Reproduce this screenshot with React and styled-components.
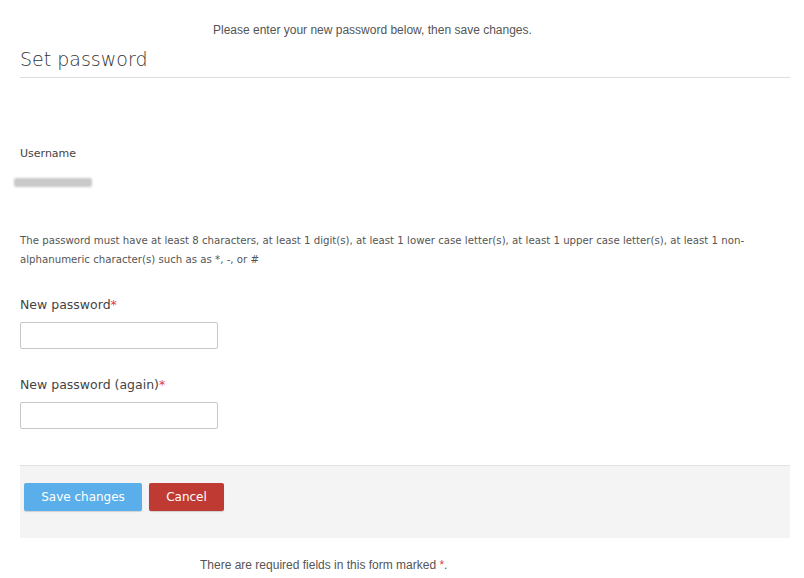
import React from "react";
import styled, { createGlobalStyle } from "styled-components";

const GlobalStyle = createGlobalStyle`
  body {
    margin: 0;
    background: #fff;
    font-family: "DejaVu Sans", "Noto Sans", sans-serif;
    color: #555;
  }
`;

const Page = styled.div`
  padding: 0 14px 0 20px;
  display: flex;
  flex-direction: column;
`;

const Note = styled.p`
  margin: ${(p) => p.$top}px 0 0 ${(p) => p.$left}px;
  font-family: "Liberation Sans Narrow", "Liberation Sans", sans-serif;
  font-size: 12px;
  line-height: 14px;
  color: #555;
`;

const Required = styled.span`
  color: #e23b3b;
`;

const Heading = styled.h2`
  margin: 9px 0 0;
  padding-bottom: 5px;
  border-bottom: 1px solid #ddd;
  font-size: 19px;
  font-weight: 300;
  line-height: 26px;
  color: #333;
`;

const FieldLabel = styled.div`
  margin-top: ${(p) => p.$top}px;
  font-size: ${(p) => (p.$small ? 11 : 12.5)}px;
  font-weight: 500;
  line-height: 16px;
  color: #444;
`;

const Redacted = styled.div`
  margin: 16px 0 0 -6px;
  width: 78px;
  height: 9px;
  background: #c9c9c9;
  border-radius: 2px;
  filter: blur(0.8px);
`;

const Rules = styled.p`
  margin: 44px 0 0;
  font-size: 10.2px;
  line-height: 19px;
  color: #555;
`;

const Input = styled.input`
  margin-top: 9px;
  width: 198px;
  height: 27px;
  box-sizing: border-box;
  border: 1px solid #c6c6c6;
  border-radius: 2px;
  background: #fff;
  padding: 0 6px;
  font: inherit;
`;

const Actions = styled.div`
  margin-top: 36px;
  height: 73px;
  box-sizing: border-box;
  padding: 17px 4px;
  background: #f4f4f4;
  border-top: 1px solid #e2e2e2;
  display: flex;
  align-items: flex-start;
  gap: 7px;
`;

const Button = styled.button`
  height: 28px;
  width: ${(p) => p.$width}px;
  padding: 0;
  border: none;
  border-radius: 2px;
  background: ${(p) => p.$bg};
  color: #fff;
  font-family: inherit;
  font-size: 12px;
  box-shadow: 0 1px 1px rgba(0, 0, 0, 0.15);
  cursor: pointer;
`;

export default function App() {
  return (
    <>
      <GlobalStyle />
      <Page>
        <Note $top={23} $left={193}>
          Please enter your new password below, then save changes.
        </Note>
        <Heading>Set password</Heading>
        <FieldLabel $top={68} $small>
          Username
        </FieldLabel>
        <Redacted />
        <Rules>
          The password must have at least 8 characters, at least 1 digit(s), at
          least 1 lower case letter(s), at least 1 upper case letter(s), at
          least 1 non-alphanumeric character(s) such as as *, -, or #
        </Rules>
        <FieldLabel $top={28}>
          New password<Required>*</Required>
        </FieldLabel>
        <Input type="password" />
        <FieldLabel $top={28}>
          New password (again)<Required>*</Required>
        </FieldLabel>
        <Input type="password" />
        <Actions>
          <Button $bg="#5aaee9" $width={118}>
            Save changes
          </Button>
          <Button $bg="#c03a34" $width={75}>
            Cancel
          </Button>
        </Actions>
        <Note $top={20} $left={180}>
          There are required fields in this form marked <Required>*</Required>.
        </Note>
      </Page>
    </>
  );
}
